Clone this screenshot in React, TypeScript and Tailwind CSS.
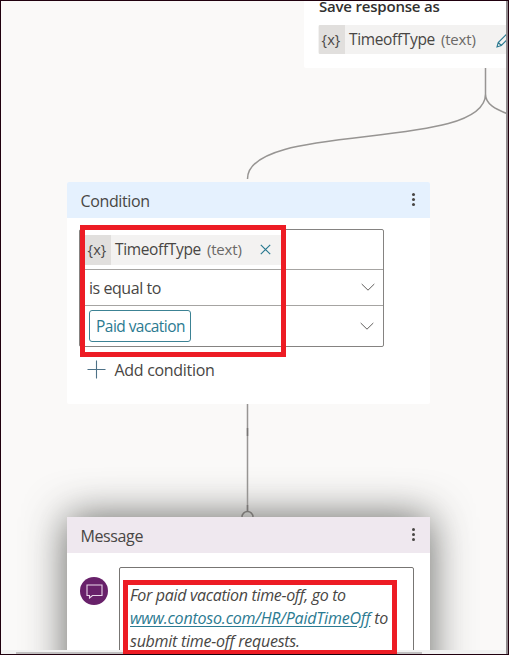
import type { ReactNode } from "react";

function Dots() {
  return (
    <div className="-mt-px flex w-[3px] flex-col gap-[2.5px]">
      <i className="h-[2.5px] w-[2.5px] rounded-full bg-[#484644]" />
      <i className="h-[2.5px] w-[2.5px] rounded-full bg-[#484644]" />
      <i className="h-[2.5px] w-[2.5px] rounded-full bg-[#484644]" />
    </div>
  );
}

function Header({ title, tone }: { title: string; tone: string }) {
  return (
    <header className={`flex h-9 items-center justify-between pl-[13.5px] pr-[15px] ${tone}`}>
      <span className="pt-px text-[16px] tracking-[-0.38px]">{title}</span>
      <Dots />
    </header>
  );
}

function Variable({ className, children }: { className: string; children: ReactNode }) {
  return (
    <div className={`flex items-center bg-[#f3f2f1] ${className}`}>
      <span className="flex h-full w-[26px] shrink-0 items-center justify-center bg-[#e1dfdd] pr-[2px] text-[14.5px] tracking-[0.1px]">
        {"{x}"}
      </span>
      <span className="ml-[4px] w-[86px] shrink-0 whitespace-nowrap text-[15.5px] tracking-[-0.35px]">TimeoffType</span>
      <span className="ml-[6px] w-9 shrink-0 whitespace-nowrap text-[15px] tracking-[-0.2px] text-[#6b6967]">(text)</span>
      {children}
    </div>
  );
}

function Chevron() {
  return (
    <svg className="h-[9px] w-[14px]" viewBox="0 0 14 9" fill="none" stroke="#605e5c" strokeWidth="1">
      <path d="M.7 1 7 7.2 13.3 1" />
    </svg>
  );
}

export default function App() {
  return (
    <main className="relative h-[655px] w-[509px] overflow-hidden bg-[#faf9f8] font-['Open_Sans','Noto_Sans',sans-serif] text-[#484644]">
      {/* Save response node */}
      <section className="absolute left-[304px] top-0 h-[68px] w-[203px] rounded-b-[2px] bg-white pl-[14px]">
        <h2 className="h-[18px] whitespace-nowrap pl-px text-[15px] font-semibold leading-[13px] tracking-[-0.2px] text-[#323130]">
          Save response as
        </h2>
        <Variable className="mt-[7px] h-[29px] w-[189px] overflow-hidden rounded-l-[2px] pl-px">
          <svg className="ml-[19px] h-4 w-4 shrink-0" viewBox="0 0 16 16" fill="none" stroke="#2b7a91" strokeWidth="1.1">
            <path d="M1 15l1.2-4.5L11.5 1.2a1.8 1.8 0 0 1 3 3L5.3 13.5zM2.2 10.5l3.1 3M10 2.8l3 3" />
          </svg>
        </Variable>
      </section>

      {/* Condition node */}
      <section className="absolute left-[67px] top-[182px] h-[222px] w-[363px] overflow-hidden rounded-[2px] bg-white">
        <Header title="Condition" tone="bg-[#e5f1fe]" />
        <div className="ml-[12px] mt-[11px] h-[118px] w-[305px] rounded-[2px] border border-[#858381]">
          <div className="flex h-[40px] items-center border-b border-[#a6a4a2] pl-[5px]">
            <Variable className="h-[30px] w-[197px]">
              <svg className="ml-[17px] h-[11px] w-[11px]" viewBox="0 0 11 11" fill="none" stroke="#2b7a91" strokeWidth="1.2">
                <path d="m.8.8 9.4 9.4m0-9.4L.8 10.2" />
              </svg>
            </Variable>
          </div>
          <div className="flex h-[36px] items-center justify-between border-b border-[#a6a4a2] pl-[9px] pr-[8px]">
            <span className="text-[16px] tracking-[-0.45px]">is equal to</span>
            <Chevron />
          </div>
          <div className="flex h-[40px] items-center justify-between pl-[9px] pr-[9px]">
            <span className="flex h-8 w-[102px] items-center justify-center whitespace-nowrap rounded-[3px] border border-[#3c8294] pl-px pt-px text-[15.5px] tracking-[-0.55px] text-[#2b7a91]">
              Paid vacation
            </span>
            <Chevron />
          </div>
        </div>
        <div className="ml-5 mt-[12px] flex h-[20px] items-center gap-[8.5px]">
          <svg className="h-[19px] w-[19px]" viewBox="0 0 19 19" stroke="#4d7187" strokeWidth="1.1">
            <path d="M9.5.5v18M.5 9.5h18" />
          </svg>
          <span className="pt-px text-[16px] tracking-[-0.3px]">Add condition</span>
        </div>
      </section>

      {/* Message node */}
      <section className="absolute left-[67px] top-[517px] h-[180px] w-[363px] rounded-[2px] bg-white shadow-[0_0_42px_0_rgba(40,42,38,0.72)]">
        <Header title="Message" tone="bg-[#efe8ef]" />
        <div className="flex pl-[13px] pt-[14px]">
          <span className="mt-[10px] flex h-7 w-7 items-center justify-center rounded-full bg-[#68216a]">
            <svg className="h-[15px] w-[17px]" viewBox="0 0 17 15" fill="none" stroke="#e9d8ea" strokeWidth="1.1">
              <path d="M1 1h15v10.5H6.5L3.5 14v-2.5H1z" />
            </svg>
          </span>
          <div className="ml-[11px] h-[130px] w-[295px] rounded-[2px] border border-[#777573] pl-[10px] pt-[16px] text-[16px] italic leading-[22.8px]">
            <p className="whitespace-nowrap tracking-[-0.32px]">For paid vacation time-off, go to</p>
            <p className="whitespace-nowrap tracking-[-0.2px]">
              <span className="text-[#2b7a91] underline underline-offset-2">www.contoso.com/HR/PaidTimeOff</span> to
            </p>
            <p className="whitespace-nowrap tracking-[-0.25px]">submit time-off requests.</p>
          </div>
        </div>
      </section>

      {/* Flow connectors */}
      <svg className="absolute inset-0 h-[655px] w-[509px]" fill="none" stroke="#979593" strokeWidth="1.5">
        <path d="M485.5 68v26C485.5 152 247.5 121 247.5 179M485.5 94C485.5 104 495 109 508 114M247.5 404v107" />
        <path d="M247.5 428v8M247.5 505v6" stroke="#777573" />
        <path d="M242 517a5.5 5.5 0 0 1 11 0" stroke="#777573" />
      </svg>

      {/* Callout outlines */}
      <div className="absolute left-[80px] top-[225px] h-[132px] w-[206px] border-[5px] border-[#ed1c24]" />

      {/* Window edges and horizontal scrollbar */}
      <div className="absolute bottom-0 left-0 h-[5px] w-full bg-[#f1f1f1] pl-4 pt-[2px]">
        <div className="h-[2px] w-[406px] bg-[#c1bfc0]" />
      </div>
      <div className="absolute left-[123px] top-[580px] h-[74px] w-[274px] border-[5px] border-b-[4px] border-[#ed1c24]" />
      <div className="absolute right-[1px] top-0 h-full w-[2px] bg-[#8f898c]" />
      <div className="absolute inset-0 border border-[#20000e]" />
    </main>
  );
}
